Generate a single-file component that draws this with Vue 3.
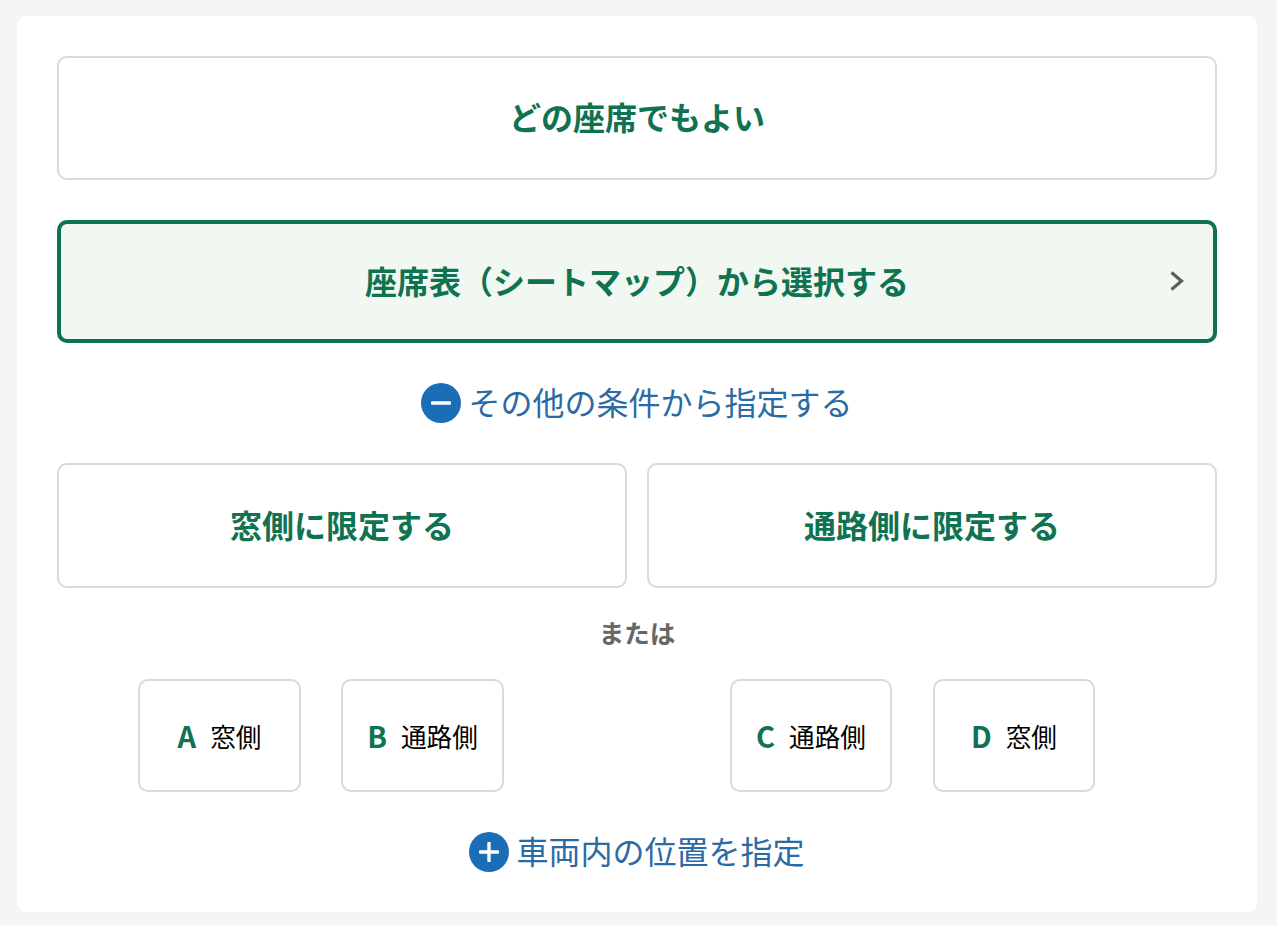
<script setup>
const seats = [
  [{ k: 'A', t: '窓側' }, { k: 'B', t: '通路側' }],
  [{ k: 'C', t: '通路側' }, { k: 'D', t: '窓側' }],
]
</script>

<template>
  <main class="page">
    <section class="card">
      <button class="box big"><span class="lift">どの座席でもよい</span></button>
      <button class="box big map">
        <span class="pk lift">座席表（シートマップ）から選択する</span>
        <svg class="chev" width="16" height="22" viewBox="0 0 16 22"><path d="M2.5 2.5 L12.5 11 L2.5 19.5" fill="none" stroke="#5f5f5f" stroke-width="3.2"/></svg>
      </button>
      <div class="link first">
        <svg class="ico" width="40" height="40" viewBox="0 0 40 40"><circle cx="20" cy="20" r="20" fill="#1b6eb5"/><rect x="10" y="18.3" width="20" height="3.4" rx="1" fill="#fff"/></svg>
        <span class="pk lift">その他の条件から指定する</span>
      </div>
      <div class="two">
        <button class="box half"><span class="lift">窓側に限定する</span></button>
        <button class="box half"><span class="lift">通路側に限定する</span></button>
      </div>
      <div class="or">または</div>
      <div class="seats">
        <div v-for="(g, i) in seats" :key="i" class="group">
          <button v-for="s in g" :key="s.k" class="box seat"><b>{{ s.k }}</b><span>{{ s.t }}</span></button>
        </div>
      </div>
      <div class="link last">
        <svg class="ico" width="40" height="40" viewBox="0 0 40 40"><circle cx="20" cy="20" r="20" fill="#1b6eb5"/><rect x="10" y="18.3" width="20" height="3.4" rx="1" fill="#fff"/><rect x="18.3" y="10" width="3.4" height="20" rx="1" fill="#fff"/></svg>
        <span class="pk lift">車両内の位置を指定</span>
      </div>
    </section>
  </main>
</template>

<style scoped>
.page {
  box-sizing: border-box;
  height: 925px;
  padding: 16px 20px 13px 17px;
  background: #f5f5f5;
  font-family: "Noto Sans CJK JP", "Noto Sans", sans-serif;
  overflow: hidden;
}
.card {
  box-sizing: border-box;
  height: 896px;
  padding: 40px;
  background: #fff;
  border-radius: 10px;
  display: flex;
  flex-direction: column;
}
.box {
  box-sizing: border-box;
  margin: 0;
  padding: 0;
  background: #fff;
  border: 2px solid #d9d9d9;
  border-radius: 10px;
  font-family: inherit;
  display: flex;
  align-items: center;
  justify-content: center;
}
.big, .half {
  color: #0f7250;
  font-size: 32px;
  font-weight: 700;
  line-height: 1;
}
.big { height: 124px; width: 100%; flex: none; }
.lift { padding-bottom: 4px; }
.map {
  position: relative;
  margin-top: 40px;
  height: 123px;
  background: #f1f8f2;
  border: 4px solid #0f7250;
}
.pk { font-feature-settings: "pkna"; }
.chev { position: absolute; right: 28px; top: 46px; }
.link {
  height: 40px;
  flex: none;
  display: flex;
  align-items: center;
  justify-content: center;
  gap: 7px;
  color: #2a6aa5;
  font-size: 32px;
  line-height: 40px;
}
.first { margin-top: 40px; }
.two { margin-top: 40px; display: flex; gap: 20px; }
.half { flex: 1; height: 125px; }
.or {
  margin-top: 30px;
  height: 30px;
  line-height: 28px;
  text-align: center;
  color: #666;
  font-size: 25.5px;
  font-weight: 700;
}
.seats {
  margin-top: 32px;
  padding-left: 81px;
  display: flex;
  gap: 226px;
}
.group { display: flex; gap: 40px; }
.group + .group { gap: 41px; }
.seat { width: 163px; height: 113px; gap: 14px; color: #000; font-size: 25.6px; line-height: 1; }
.group + .group .seat { width: 162px; }
.seat b { color: #0f7250; font-size: 29px; font-weight: 700; }
.last { margin-top: 40px; }
</style>

<style>
html, body { margin: 0; background: #f5f5f5; }
</style>
